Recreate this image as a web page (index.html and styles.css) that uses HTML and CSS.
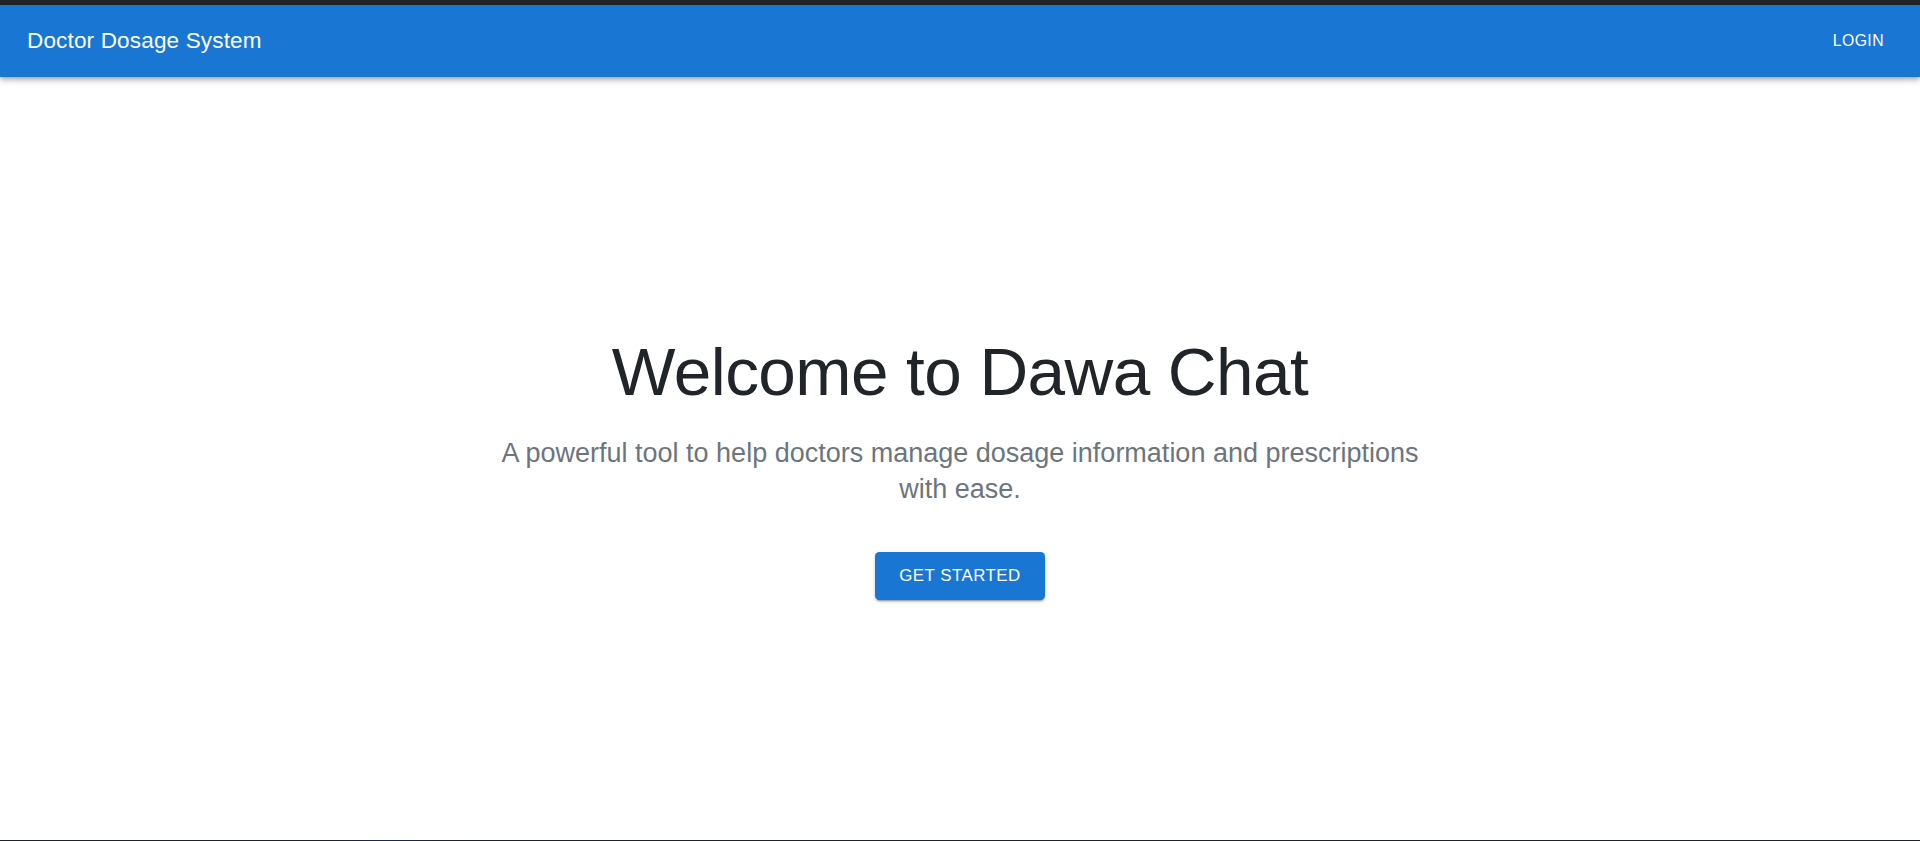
FILE: index.html
```html
<!DOCTYPE html>
<html lang="en">
<head>
<meta charset="utf-8">
<title>Doctor Dosage System</title>
<link rel="stylesheet" href="styles.css">
</head>
<body>
<div class="page">
  <div class="top-strip"></div>
  <header class="appbar">
    <div class="brand">Doctor Dosage System</div>
    <button class="nav-btn">Login</button>
  </header>
  <main class="hero">
    <h1 class="hero-title">Welcome to Dawa Chat</h1>
    <p class="hero-sub">A powerful tool to help doctors manage dosage information and prescriptions with ease.</p>
    <button class="cta">Get Started</button>
  </main>
  <div class="bottom-line"></div>
</div>
</body>
</html>
```
FILE: styles.css
```css
* { box-sizing: border-box; }
html, body { margin: 0; padding: 0; }
body {
  font-family: "Liberation Sans", Arial, sans-serif;
  background: #ffffff;
  overflow: hidden;
}
.page {
  display: flex;
  flex-direction: column;
  height: 841px;
}
.top-strip {
  height: 5px;
  background: #222327;
  flex: none;
}
.appbar {
  flex: none;
  height: 72px;
  background: #1976d2;
  color: #ffffff;
  display: flex;
  align-items: center;
  justify-content: space-between;
  padding: 0 27px;
  box-shadow: 0 2px 4px -1px rgba(0,0,0,0.2), 0 4px 5px 0 rgba(0,0,0,0.14), 0 1px 10px 0 rgba(0,0,0,0.12);
  position: relative;
  z-index: 1;
}
.brand {
  font-size: 22.5px;
  line-height: 1.6;
  font-weight: 400;
  letter-spacing: 0.0075em;
}
.nav-btn {
  background: none;
  border: 0;
  color: #ffffff;
  font-family: inherit;
  font-size: 15.75px;
  letter-spacing: 0.02857em;
  text-transform: uppercase;
  padding: 7px 9px;
  line-height: 1.75;
  font-weight: 500;
  cursor: pointer;
}
.hero {
  flex: 1;
  display: flex;
  flex-direction: column;
  align-items: center;
  text-align: center;
  padding-top: 254px;
}
.hero-title {
  margin: 0;
  font-size: 67.5px;
  line-height: 1.2;
  font-weight: 400;
  letter-spacing: -0.0085em;
  color: #212529;
}
.hero-sub {
  margin: 23px 0 0;
  max-width: 940px;
  font-size: 27px;
  line-height: 36px;
  color: #6c757d;
}
.cta {
  margin-top: 45px;
  height: 48px;
  padding: 0 24.75px;
  display: inline-flex;
  align-items: center;
  background: #1976d2;
  color: #ffffff;
  border: 0;
  border-radius: 4.5px;
  font-family: inherit;
  font-size: 16.875px;
  font-weight: 500;
  letter-spacing: 0.02857em;
  text-transform: uppercase;
  box-shadow: 0 3px 1px -2px rgba(0,0,0,0.2), 0 2px 2px 0 rgba(0,0,0,0.14), 0 1px 5px 0 rgba(0,0,0,0.12);
  cursor: pointer;
}
.bottom-line {
  flex: none;
  height: 1px;
  background: linear-gradient(90deg, #1f2229 0%, #1f2229 17%, #1b2a4a 20%, #1f2229 24%, #1f2229 100%);
}
```
